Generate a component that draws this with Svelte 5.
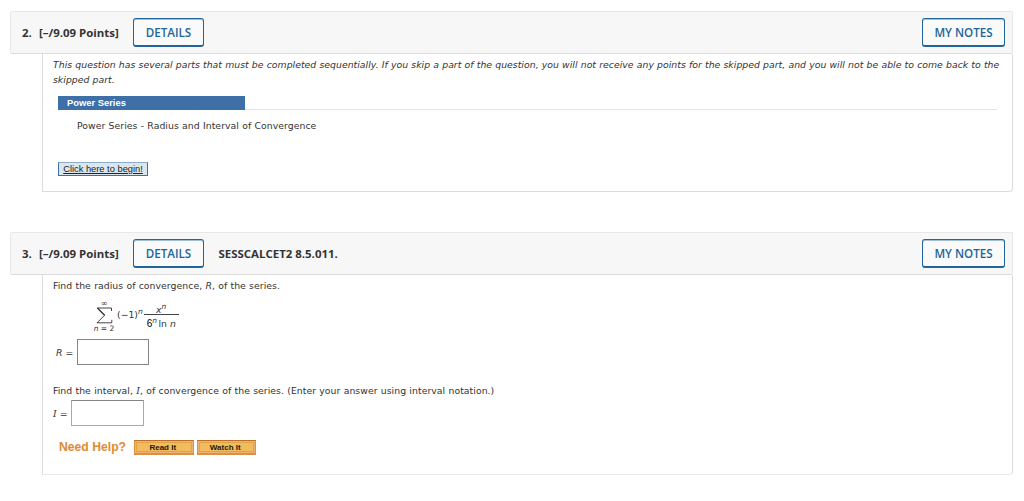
<script lang="ts">
	let radius = $state('');
	let interval = $state('');
</script>

{#snippet questionHeader(num: string, title: string)}
	<header class="question-header">
		<span class="num">{num}.</span>
		<span class="points">[–/9.09 Points]</span>
		<button class="btn btn-details">DETAILS</button>
		<span class="title">{title}</span>
		<button class="btn btn-notes">MY NOTES</button>
	</header>
{/snippet}

<main class="assignment">
	<section class="question">
		{@render questionHeader('2', '')}
		<div class="question-body sequential">
			<p class="notice">
				<span>This question has several parts that must be completed sequentially. If you skip a part of the question, you will not receive any points for the skipped part, and you will not be able to come back to the</span>
				<span>skipped part.</span>
			</p>
			<div class="tutorial-bar"><span class="tutorial-tab">Power Series</span></div>
			<p class="tutorial-name">Power Series - Radius and Interval of Convergence</p>
			<a class="begin" href="#begin">Click here to begin!</a>
		</div>
	</section>

	<section class="question">
		{@render questionHeader('3', 'SESSCALCET2 8.5.011.')}
		<div class="question-body series">
			<p>Find the radius of convergence, <i>R</i>, of the series.</p>

			<div class="formula">
				<div class="sum">
					<span class="limit upper">∞</span>
					<svg class="sigma" width="17" height="17" viewBox="0 0 17 17">
						<path d="M15.5 4V1H1.2L8.5 8.3 1 15.8H15.8V12.8" fill="none" stroke="#444" stroke-width="1" />
						<path d="M1.5 1 8.8 8.5" stroke="#444" stroke-width="1.5" />
					</svg>
					<span class="limit"><i>n</i> = 2</span>
				</div>
				<span class="term">(−1)<sup>n</sup></span>
				<div class="fraction">
					<span class="numerator"><i>x</i><sup>n</sup></span>
					<span class="denominator"><span class="six">6</span><sup>n</sup>ln <i>n</i></span>
				</div>
			</div>

			<label class="answer answer-r">
				<span><i>R</i> =</span>
				<input type="text" bind:value={radius} />
			</label>

			<p class="interval-prompt">Find the interval, <i class="var-i">I</i>, of convergence of the series. (Enter your answer using interval notation.)</p>

			<label class="answer answer-i">
				<span><i class="var-i">I</i> =</span>
				<input type="text" bind:value={interval} />
			</label>

			<div class="help">
				<span class="help-label">Need Help?</span>
				<button class="help-btn">Read It</button>
				<button class="help-btn">Watch It</button>
			</div>
		</div>
	</section>
</main>

<style>
	:global(body) {
		background: #fff;
	}

	.assignment {
		box-sizing: border-box;
		width: 1024px;
		height: 501px;
		padding: 11px 11px 0 10px;
		overflow: hidden;
		color: #333;
		font-family: Verdana, 'DejaVu Sans', sans-serif;
		font-size: 9.3px;
		line-height: 14px;
	}

	p {
		margin: 0;
		letter-spacing: 0.05px;
		word-spacing: 0.23px;
		white-space: nowrap;
	}

	.question {
		margin-bottom: 40px;
	}

	/* Question header */
	.question-header {
		box-sizing: border-box;
		display: flex;
		align-items: center;
		height: 43px;
		padding: 0 7px 0 11px;
		background: #f7f7f7;
		border: 1px solid #e8e8e8;
		border-bottom-color: #dcdcdc;
		border-radius: 2px;
		font-family: 'Open Sans', sans-serif;
		font-size: 11.45px;
		font-weight: 700;
		line-height: 13px;
		white-space: nowrap;
	}

	.num {
		width: 17px;
	}

	.points {
		width: 94px;
	}

	.title {
		margin-left: 14.5px;
	}

	.btn {
		box-sizing: border-box;
		height: 29px;
		padding: 0;
		background: #fafafa;
		border: 1px solid #22659a;
		border-bottom-width: 2px;
		border-radius: 3px;
		box-shadow: inset 0 1px 0 #a3c0d6;
		color: #22659a;
		font-family: 'Open Sans', sans-serif;
		font-size: 11.6px;
		font-weight: 600;
	}

	.btn-details {
		width: 71px;
	}

	.btn-notes {
		width: 83px;
		margin-left: auto;
	}

	/* Question body */
	.question-body {
		box-sizing: border-box;
		display: flex;
		flex-direction: column;
		align-items: flex-start;
		margin-left: 32px;
		border: 1px solid #dcdcdc;
		border-top: 0;
		border-radius: 0 0 4px 0;
	}

	.sequential {
		height: 138px;
		padding: 4px 15px 0 10px;
	}

	.series {
		height: 200px;
		padding: 4px 15px 0 10px;
		border-bottom-color: #e8e8e8;
	}

	.notice {
		display: flex;
		flex-direction: column;
		font-style: italic;
		letter-spacing: 0.03px;
		word-spacing: 0.17px;
		line-height: 14.5px;
	}

	.tutorial-bar {
		align-self: stretch;
		display: flex;
		margin: 9px 0 0 5px;
		border-bottom: 1px solid #dce6ee;
	}

	.tutorial-tab {
		box-sizing: border-box;
		width: 187px;
		height: 14px;
		margin-bottom: -1px;
		padding-left: 9px;
		background: #3e6fa6;
		color: #fff;
		font: bold 9.4px/14px 'Liberation Sans', Arial, sans-serif;
	}

	.tutorial-name {
		margin: 9px 0 0 24px;
	}

	.begin {
		box-sizing: border-box;
		width: 90px;
		height: 14px;
		margin: 29px 0 0 5px;
		background: #dce6ee;
		border: 1px solid #3e6fa6;
		border-top-color: #8badcb;
		color: #222;
		font: 9.3px/12px 'Liberation Sans', Arial, sans-serif;
		text-align: center;
		white-space: nowrap;
	}

	/* Series formula */
	.formula {
		display: flex;
		height: 35px;
		margin: 6px 0 0 40px;
		white-space: nowrap;
	}

	.sum {
		display: flex;
		flex-direction: column;
		align-items: center;
		width: 22px;
	}

	.limit {
		font-size: 7.5px;
		line-height: 9px;
	}

	.upper {
		height: 8px;
		font-size: 8.5px;
	}

	.sigma {
		display: block;
	}

	.term {
		margin: 9px 0 0 2px;
	}

	sup {
		font-size: 7.5px;
		font-style: italic;
		line-height: 0;
		vertical-align: 4px;
	}

	.fraction {
		display: flex;
		flex-direction: column;
		align-items: center;
		width: 35px;
		margin-left: 1px;
		padding-top: 5px;
	}

	.numerator {
		height: 10px;
		line-height: 12px;
	}

	.denominator {
		width: 100%;
		border-top: 1px solid #444;
		line-height: 17px;
		text-align: center;
	}

	.denominator sup {
		margin-right: 1.5px;
	}

	.six {
		color: #000;
		font-family: 'Liberation Sans', Arial, sans-serif;
		font-size: 10px;
	}

	/* Answers */
	.answer {
		display: flex;
		align-items: center;
	}

	.answer span {
		padding-top: 1px;
	}

	.answer-r {
		margin: 5px 0 0 3px;
	}

	.answer-r span {
		width: 21px;
	}

	.answer-i span {
		width: 18px;
	}

	.answer-i {
		margin-top: 2px;
	}

	.answer input {
		box-sizing: border-box;
		width: 72px;
		height: 26px;
		padding: 2px 4px;
		border: 1px solid #858585;
		font: inherit;
	}

	.answer-i input {
		width: 73px;
		border-color: #858585 #aaa #aaa;
	}

	.var-i {
		font-family: 'DejaVu Serif', serif;
	}

	.interval-prompt {
		margin-top: 19px;
	}

	/* Help row */
	.help {
		display: flex;
		align-items: center;
		margin: 14px 0 0 6px;
	}

	.help-label {
		width: 75px;
		color: #e08a35;
		font: bold 12.2px/15px 'Liberation Sans', Arial, sans-serif;
		white-space: nowrap;
	}

	.help-btn {
		box-sizing: border-box;
		width: 59.5px;
		height: 15px;
		margin-right: 3px;
		padding: 1px 2px 0 0;
		background: #f2bb5b;
		border: 1px solid #dc9140;
		border-top-color: #b8702d;
		border-bottom-width: 2px;
		box-shadow: inset 0 0 0 1px #edb078, inset 0 0 0 2px #e0a348;
		color: #221a08;
		font: bold 8px/11px 'Liberation Sans', Arial, sans-serif;
	}
</style>
